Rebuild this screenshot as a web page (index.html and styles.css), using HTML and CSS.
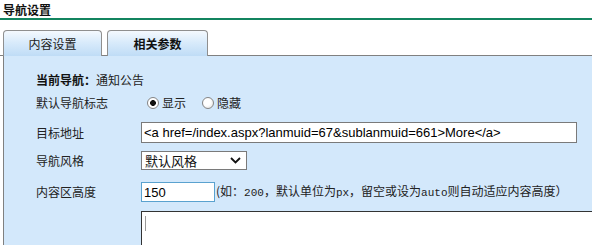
FILE: index.html
```html
<!DOCTYPE html>
<html lang="zh-CN">
<head>
  <meta charset="UTF-8">
  <title>导航设置</title>
  <link rel="stylesheet" href="styles.css">
</head>
<body>
  <div class="page">
    <h2 class="page-title">导航设置</h2>
    <div class="tabs">
      <span class="tab">内容设置</span>
      <span class="tab on">相关参数</span>
    </div>
    <div class="panel">
      <div class="row row-head"><b>当前导航：</b>通知公告</div>
      <div class="row">
        <span class="label">默认导航标志</span>
        <label class="radio"><input type="radio" name="show" checked>显示</label>
        <label class="radio radio-2"><input type="radio" name="show">隐藏</label>
      </div>
      <div class="row row-pad">
        <span class="label">目标地址</span>
        <input class="txt txt-url" type="text" value="<a href=/index.aspx?lanmuid=67&sublanmuid=661>More</a>">
      </div>
      <div class="row">
        <span class="label">导航风格</span>
        <div class="select">
          <span>默认风格</span>
          <svg width="11" height="7" viewBox="0 0 11 7"><path d="M1 1l4.5 4.5L10 1" fill="none" stroke="#111" stroke-width="1.8"/></svg>
        </div>
      </div>
      <div class="row row-pad">
        <span class="label">内容区高度</span>
        <input class="txt txt-height" type="text" value="150">
        <span class="hint">(如：<i>200</i>，默认单位为<i>px</i>，留空或设为<i>auto</i>则自动适应内容高度）</span>
      </div>
      <div class="row row-area">
        <span class="label"></span>
        <div class="area"><span class="caret"></span></div>
      </div>
    </div>
  </div>
</body>
</html>
```

FILE: styles.css
```css
*{
  margin: 0;
  padding: 0;
  box-sizing: border-box;
}
body{
  background: #fff;
  font-size: 12px;
  font-family: "Noto Sans CJK SC", sans-serif;
  color: #222;
  overflow: hidden;
}
.page{
  width: 592px;
  height: 245px;
  overflow: hidden;
}
.page-title{
  height: 20px;
  padding: 2px 0 0 3px;
  line-height: 16px;
  font-size: 12px;
  font-weight: bold;
  color: #111;
  border-bottom: 2px solid #13845f;
}
.tabs{
  display: flex;
  gap: 5px;
  height: 36px;
  padding: 10px 0 0 3px;
  border-bottom: 1px solid #808080;
}
.tab{
  width: 99px;
  height: 26px;
  line-height: 25px;
  text-align: center;
  border: 1px solid #8f8f8f;
  border-bottom: 0;
  border-radius: 4px 4px 0 0;
  background: linear-gradient(180deg, #f4f9fe 0%, #d9ebfb 45%, #bfdcf6 100%);
  color: #222;
}
.tab.on{
  width: 101px;
  font-weight: bold;
  color: #111;
}
.panel{
  height: 189px;
  margin-left: 3px;
  padding: 12px 0 0 32px;
  background: #d3e8fb;
  border-left: 1px solid #808080;
  overflow: hidden;
}
.row{
  display: flex;
  align-items: center;
  padding: 4px 0;
  line-height: 14px;
}
.row-head{
  line-height: 16px;
}
.row-head b{
  color: #111;
}
.row-pad{
  margin-top: 4px;
}
.row-area{
  margin-top: 1px;
  align-items: flex-start;
}
.label{
  flex: none;
  width: 105px;
}
.radio{
  display: flex;
  align-items: center;
}
.radio input{
  appearance: none;
  width: 12px;
  height: 12px;
  margin: 0 3px 0 6px;
  border: 1px solid #858585;
  border-radius: 50%;
  background: radial-gradient(circle at 40% 40%, #fff 0 40%, #dcdcdc 100%);
}
.radio input:checked{
  background: radial-gradient(circle, #111 0 2.6px, #fff 3.2px);
}
.radio-2 input{
  margin-left: 16px;
}
.txt{
  height: 21px;
  padding: 0 2px;
  border: 1px solid #7a7a7a;
  background: #fff;
  font-size: 13px;
  font-family: "Liberation Sans", Arial, sans-serif;
  color: #000;
  outline: none;
}
.txt-url{
  width: 436px;
}
.txt-height{
  width: 74px;
  height: 20px;
  border-color: #5aa2cf;
}
.select{
  display: flex;
  align-items: center;
  justify-content: space-between;
  width: 106px;
  height: 19px;
  padding: 0 5px 0 3px;
  border: 1px solid #7a7a7a;
  background: #fff;
  font-size: 13px;
  color: #111;
}
.hint{
  margin-left: 1px;
  white-space: nowrap;
  color: #222;
}
.hint i{
  font-style: normal;
  font-size: 11px;
  font-family: "Liberation Mono", monospace;
}
.area{
  flex: none;
  width: 520px;
  height: 80px;
  padding: 4px 0 0 3px;
  border: 1px solid #333;
  border-right: 0;
  background: #fff;
}
.caret{
  display: block;
  width: 1px;
  height: 15px;
  background: #999;
}
```
